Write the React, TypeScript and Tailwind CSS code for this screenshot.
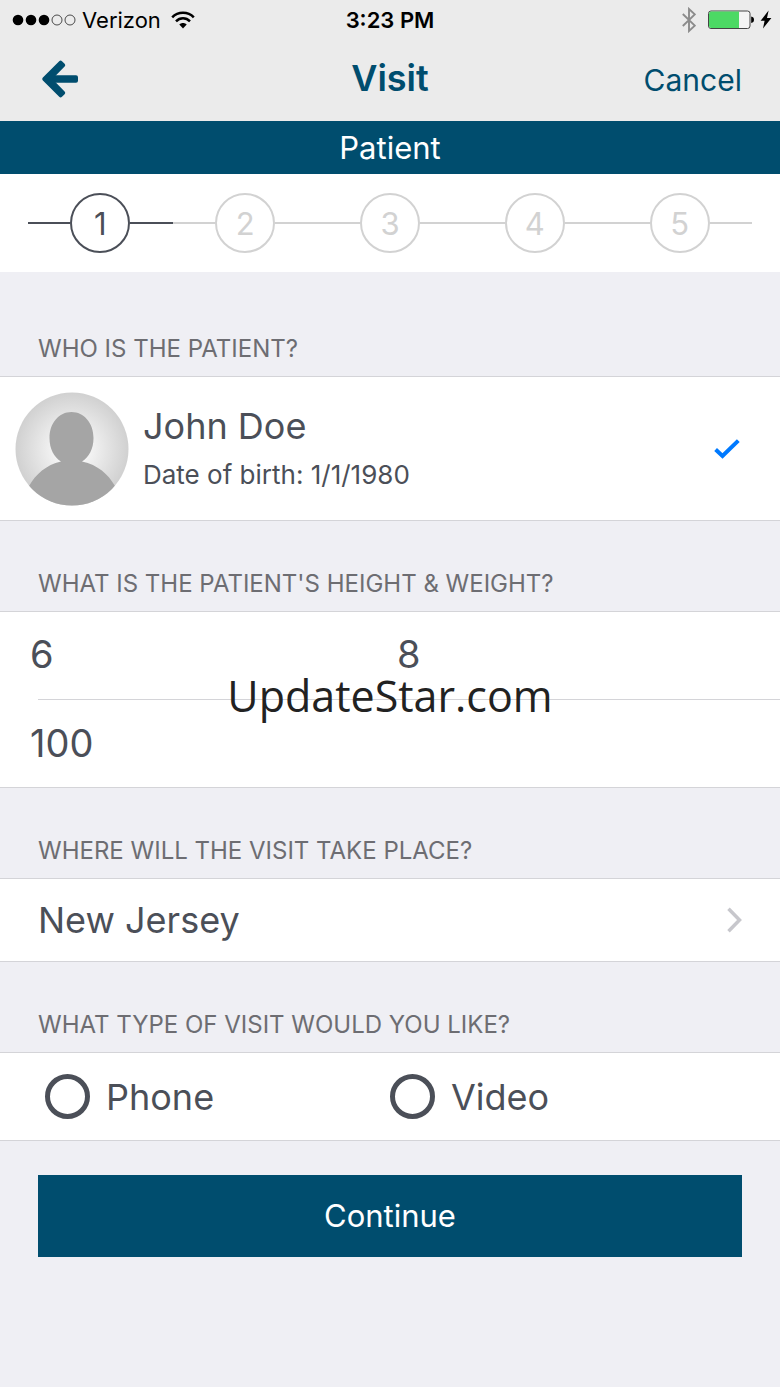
import { useState } from "react";
import type { ReactNode } from "react";

function StatusBar() {
  return (
    <div className="grid grid-cols-3 items-center h-10 px-3 text-[22px] text-black">
      <div className="flex items-center gap-[6px]">
        <svg className="w-[64px] h-[12px] shrink-0" viewBox="0 0 64 12" aria-hidden="true">
          <circle cx="6" cy="6" r="5.3" />
          <circle cx="19" cy="6" r="5.3" />
          <circle cx="32" cy="6" r="5.3" />
          <circle cx="45" cy="6" r="5" fill="none" stroke="#222" strokeWidth="0.8" />
          <circle cx="58" cy="6" r="5" fill="none" stroke="#222" strokeWidth="0.8" />
        </svg>
        <span>Verizon</span>
        <svg className="ml-1 w-6 h-[18px] shrink-0" viewBox="0 0 24 18" fill="none" stroke="black" strokeWidth="2.5" aria-hidden="true">
          <path d="M1.2 6.3 C7 0.3 17 0.3 22.8 6.3" />
          <path d="M5 10.3 C9 6.3 15 6.3 19 10.3" />
          <path d="M8.3 13.6 C10.4 11.6 13.6 11.6 15.7 13.6 L12 17.4 Z" fill="black" stroke="none" />
        </svg>
      </div>
      <div className="text-center font-semibold">3:23 PM</div>
      <div className="flex items-center justify-end">
        <svg className="w-[14px] h-[26px]" viewBox="0 0 14 26" fill="none" stroke="#8b8b8b" strokeWidth="1.9" aria-hidden="true">
          <path d="M0.8 7 L12.8 18.6 L7 24 V2 L12.8 7.4 L0.8 19" />
        </svg>
        <svg className="ml-3 w-[48px] h-[20px]" viewBox="0 0 48 20" aria-hidden="true">
          <rect x="0.5" y="1" width="41.5" height="17.5" rx="2.5" fill="#f4f4f4" stroke="#444" />
          <path d="M3 1.5 H31 V18 H3 Q1 18 1 16 V3.5 Q1 1.5 3 1.5 Z" fill="#4cd964" />
          <path d="M43.2 6.5 Q46 7.1 46 9.8 Q46 12.5 43.2 13.1 Z" />
        </svg>
        <svg className="ml-1 -mr-1 w-[12px] h-[20px]" viewBox="0 0 12 20" aria-hidden="true">
          <path d="M8.6 0.5 L0.6 10.8 H4.6 L3 18.500 L11.4 8 H7 Z" />
        </svg>
      </div>
    </div>
  );
}

function NavBar() {
  return (
    <div className="grid grid-cols-3 items-center h-[81px] px-[38px] text-[#004d6e]">
      <button type="button" aria-label="Back" className="justify-self-start px-1 pb-1">
        <svg className="w-9 h-[38px]" viewBox="0 0 36 38" fill="currentColor" aria-hidden="true">
          <path d="M10 15.2 H34 Q36 15.200 36 17.200 V20.800 Q36 22.800 34 22.800 H10 Z" />
          <path d="M0.9 17.6 L17.2 1.2 Q18.6 0 20 1.2 L22.6 3.8 Q23.8 5.2 22.6 6.6 L10.4 19 L22.6 31.4 Q23.8 32.8 22.6 34.2 L20 36.8 Q18.6 38 17.2 36.8 L0.9 20.4 Q-0.4 19 0.9 17.6 Z" />
        </svg>
      </button>
      <h1 className="text-center text-[36px] leading-[44px] font-semibold pb-[6px]">Visit</h1>
      <button type="button" className="justify-self-end text-[30px]">Cancel</button>
    </div>
  );
}

function Steps({ current }: { current: number }) {
  return (
    <ol className="flex bg-white h-[98px] px-7 items-center">
      {[1, 2, 3, 4, 5].map((n) => (
        <li
          key={n}
          className={`flex flex-1 items-center ${n === current ? "text-[#4b4f58]" : "text-[#d2d2d2]"}`}
          aria-current={n === current ? "step" : undefined}
        >
          <span className="flex-1 h-[2px] bg-current" />
          <span className="flex items-center justify-center w-[60px] h-[60px] pt-[3px] rounded-full border-2 border-current text-[31px]">
            {n}
          </span>
          <span className="flex-1 h-[2px] bg-current" />
        </li>
      ))}
    </ol>
  );
}

function Section({ title, children }: { title: string; children: ReactNode }) {
  return (
    <section>
      <h2 className="px-[38px] pt-12 pb-3 text-[24px] leading-[30px] text-[#6d6d72]">{title}</h2>
      <div className="bg-white border-y border-[#d4d4d8]">{children}</div>
    </section>
  );
}

function Avatar() {
  return (
    <svg className="w-[114px] h-[114px] shrink-0" viewBox="0 0 114 114" aria-hidden="true">
      <defs>
        <radialGradient id="avatar-bg">
          <stop offset="0.3" stopColor="#f4f4f4" />
          <stop offset="1" stopColor="#d0d0d0" />
        </radialGradient>
        <clipPath id="avatar-clip">
          <circle cx="57" cy="57" r="56.5" />
        </clipPath>
      </defs>
      <g clipPath="url(#avatar-clip)">
        <rect width="114" height="114" fill="url(#avatar-bg)" />
        <path
          fill="#a5a5a5"
          d="M56.5 20 C69 20 78.5 31 78.5 46 C78.5 57 74 65 67 69.5 C83 73 93 82 100 94 L104 114 H10 L14 94 C21 82 31 73 46 69.5 C39 65 34.5 57 34.5 46 C34.5 31 44 20 56.5 20 Z"
        />
      </g>
    </svg>
  );
}

function VisitOption({ value, selected, onSelect }: { value: string; selected: string; onSelect: (v: string) => void }) {
  return (
    <label className="flex items-center gap-4">
      <input
        type="radio"
        name="visit-type"
        value={value}
        checked={selected === value}
        onChange={() => onSelect(value)}
        className="appearance-none w-[45px] h-[45px] rounded-full border-[5px] border-[#4b4f58] bg-white checked:bg-[#004d6e]"
      />
      {value}
    </label>
  );
}

export default function App() {
  const [feet, setFeet] = useState("6");
  const [inches, setInches] = useState("8");
  const [pounds, setPounds] = useState("100");
  const [visitType, setVisitType] = useState("");

  return (
    <div className="relative min-h-screen bg-[#efeff4] text-[#4b4f58] font-['Inter','Liberation_Sans',sans-serif]">
      <header className="bg-[#ebebeb]">
        <StatusBar />
        <NavBar />
      </header>
      <div className="bg-[#004d6e] text-white text-center text-[31px] leading-[53px]">Patient</div>
      <Steps current={1} />

      <main className="pt-[14px]">
        <Section title="WHO IS THE PATIENT?">
          <button type="button" className="flex w-full items-center h-[143px] pl-[15px] pr-10 text-left">
            <Avatar />
            <span className="flex-1 pl-[14px] pt-[2px]">
              <span className="block text-[36px] leading-[50px]">John Doe</span>
              <span className="block text-[26px] leading-[48px]">Date of birth: 1/1/1980</span>
            </span>
            <svg className="w-[26px] h-[20px]" viewBox="0 0 26 20" fill="none" stroke="#007aff" strokeWidth="4" aria-hidden="true">
              <path d="M1.6 10.5 L8.5 17 L24.3 1.6" />
            </svg>
          </button>
        </Section>

        <Section title="WHAT IS THE PATIENT'S HEIGHT & WEIGHT?">
          <div className="text-[38px]">
            <div className="flex h-[87px]">
              <input
                aria-label="Height, feet"
                inputMode="numeric"
                className="w-1/2 min-w-0 pl-[30px] pb-[2px] outline-none"
                value={feet}
                onChange={(e) => setFeet(e.target.value)}
              />
              <input
                aria-label="Height, inches"
                inputMode="numeric"
                className="w-1/2 min-w-0 pl-[7px] pb-[2px] outline-none"
                value={inches}
                onChange={(e) => setInches(e.target.value)}
              />
            </div>
            <div className="ml-[38px] border-t border-[#d4d4d8]" />
            <input
              aria-label="Weight, pounds"
              inputMode="numeric"
              className="block w-full h-[87px] pl-[30px] pb-[2px] outline-none"
              value={pounds}
              onChange={(e) => setPounds(e.target.value)}
            />
          </div>
        </Section>

        <Section title="WHERE WILL THE VISIT TAKE PLACE?">
          <button type="button" className="flex w-full items-center justify-between h-[82px] px-[38px] text-[36px]">
            New Jersey
            <svg className="w-[15px] h-[26px]" viewBox="0 0 15 26" fill="none" stroke="#c7c7cc" strokeWidth="3.5" aria-hidden="true">
              <path d="M1.5 1.8 L12.5 13 L1.5 24.2" />
            </svg>
          </button>
        </Section>

        <Section title="WHAT TYPE OF VISIT WOULD YOU LIKE?">
          <div className="grid grid-cols-2 items-center h-[87px] px-[45px] text-[36px]">
            <VisitOption value="Phone" selected={visitType} onSelect={setVisitType} />
            <VisitOption value="Video" selected={visitType} onSelect={setVisitType} />
          </div>
        </Section>

        <div className="px-[38px] pt-[34px]">
          <button type="button" className="w-full h-[82px] bg-[#004d6e] text-white text-[31px]">
            Continue
          </button>
        </div>
      </main>

      <div className="absolute inset-0 flex items-center justify-center pt-1 pointer-events-none">
        <span className="font-['Open_Sans','Noto_Sans',sans-serif] text-[43px] leading-[60px] text-[#222]">UpdateStar.com</span>
      </div>
    </div>
  );
}
